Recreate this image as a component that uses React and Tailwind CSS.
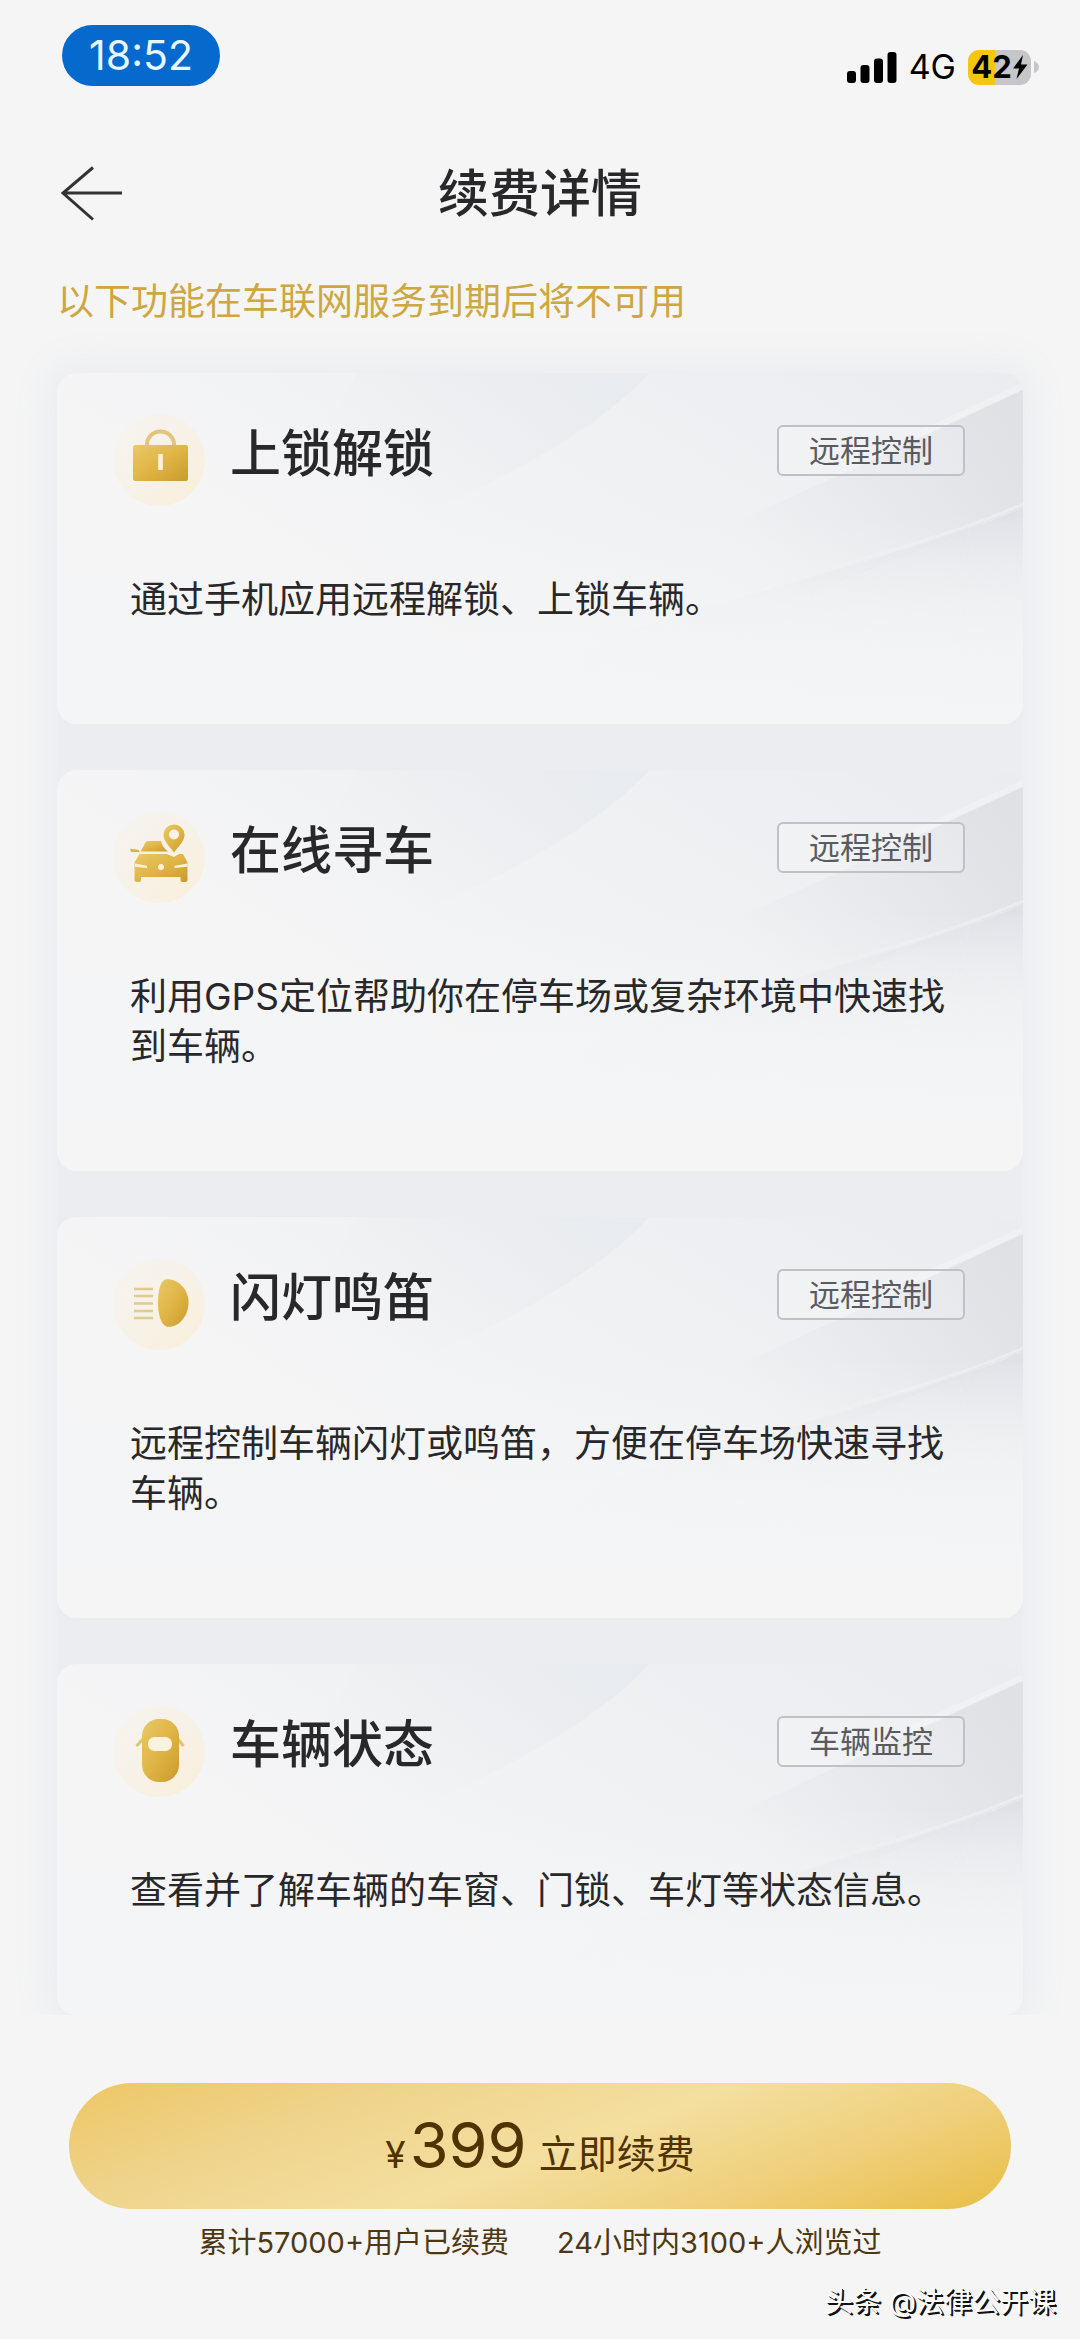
import React from 'react';

const GoldGradient = ({ id }) => (
    <defs>
        <linearGradient id={id} x1="0" y1="0" x2="1" y2="1">
            <stop offset="0" stopColor="#e9c969" />
            <stop offset="0.5" stopColor="#dfb545" />
            <stop offset="1" stopColor="#c99a2c" />
        </linearGradient>
        <linearGradient id={`${id}-halo`} x1="0" y1="0" x2="1" y2="1">
            <stop offset="0" stopColor="#f8f2e6" stopOpacity="0.3" />
            <stop offset="1" stopColor="#f9eed9" />
        </linearGradient>
    </defs>
);

const IconFrame = ({ id, children }) => (
    <svg viewBox="0 0 94 94" className="size-[94px] shrink-0" aria-hidden="true">
        <GoldGradient id={id} />
        <circle cx="47" cy="47" r="46" fill={`url(#${id}-halo)`} />
        {children}
    </svg>
);

const LockIcon = () => (
    <IconFrame id="lock">
        <path d="M35 33v-1.500a13 12.500 0 0 1 27 0v1.500" fill="none" stroke="#e2c47a" strokeWidth="4" />
        <rect x="21" y="32" width="55" height="36" rx="2.500" fill="url(#lock)" />
        <rect x="46.200" y="41" width="4.600" height="16" fill="#fdf3dc" />
    </IconFrame>
);

const FindCarIcon = () => (
    <IconFrame id="find">
        <path
            d="M33 33.500c.6-1.700 1.700-2.500 3.500-2.500h12.500c1 4.500 3.500 8 7 10.500H28.500z"
            fill="url(#find)"
        />
        <path d="M18 38.800l9 1.200.6 2.200-8.600-.4z" fill="#d9ae45" />
        <path
            fillRule="evenodd"
            d="M62 14.500a10.500 10.500 0 0 1 10.500 10.500c0 6-5.500 10.500-10.500 17.500-5-7-10.500-11.500-10.500-17.500A10.500 10.500 0 0 1 62 14.500zm0 5a5 5 0 1 0 0 10 5 5 0 0 0 0-10z"
            fill="url(#find)"
        />
        <path
            d="M27.500 44h27l7.500 3 5-3h4l4.500 8.500V70q0 2-2 2H70q-1.500 0-1.500-2v-3H29v3q0 2-1.500 2h-3q-2 0-2-2V52.500z"
            fill="url(#find)"
        />
        <path d="M23 53.500l12 2.200v2.300l-12-1.200zM75.500 53.500l-13 2.200v2.300l13-1.200z" fill="#fbf0d8" />
        <circle cx="49" cy="57" r="3" fill="#fbf0d8" />
    </IconFrame>
);

const LampIcon = () => (
    <IconFrame id="lamp">
        <path d="M22 32h19M22 39h19M22 46.500h19M22 54h19M22 61h19" stroke="#dfcb8e" strokeWidth="2.600" />
        <path d="M55 22.300C67 22.300 76.500 33 76.500 45.500S68 69.800 56.500 69.800C49.500 69.800 46 58 46 46s2.500-23.700 9-23.700z" fill="url(#lamp)" />
    </IconFrame>
);

const CarStatusIcon = () => (
    <IconFrame id="status">
        <path d="M31 35l-6.500 7M66 35l5.500 7" stroke="#dfc177" strokeWidth="3" />
        <rect x="30" y="15" width="37" height="63" rx="17" fill="url(#status)" />
        <rect x="36" y="33" width="24" height="14" rx="6.500" fill="#fbf3e0" />
    </IconFrame>
);

const features = [
    { title: '上锁解锁', tag: '远程控制', desc: '通过手机应用远程解锁、上锁车辆。', Icon: LockIcon },
    { title: '在线寻车', tag: '远程控制', desc: '利用GPS定位帮助你在停车场或复杂环境中快速找到车辆。', Icon: FindCarIcon },
    { title: '闪灯鸣笛', tag: '远程控制', desc: '远程控制车辆闪灯或鸣笛，方便在停车场快速寻找车辆。', Icon: LampIcon },
    { title: '车辆状态', tag: '车辆监控', desc: '查看并了解车辆的车窗、门锁、车灯等状态信息。', Icon: CarStatusIcon },
];

// Soft folded-paper shading behind the top part of every card
const CardShade = ({ id }) => (
    <svg
        viewBox="0 0 965 351"
        preserveAspectRatio="none"
        className="absolute inset-x-0 top-0 h-[351px] w-full"
        aria-hidden="true"
    >
        <defs>
            <linearGradient id={`${id}-base`} x1="0" y1="0.600" x2="1" y2="0">
                <stop offset="0.200" stopColor="#ebedf0" stopOpacity="0" />
                <stop offset="1" stopColor="#eaecf0" />
            </linearGradient>
            <linearGradient id={`${id}-left`} x1="0" y1="0.500" x2="1" y2="0">
                <stop offset="0.100" stopColor="#e8ebef" stopOpacity="0" />
                <stop offset="1" stopColor="#e8ebef" />
            </linearGradient>
            <linearGradient id={`${id}-fold`} x1="0" y1="0.700" x2="1" y2="0.200">
                <stop offset="0.300" stopColor="#e2e4e8" stopOpacity="0" />
                <stop offset="1" stopColor="#dfe1e5" />
            </linearGradient>
            <linearGradient id={`${id}-low`} x1="0.600" y1="0.100" x2="0.700" y2="0.900">
                <stop offset="0" stopColor="#dfe1e6" />
                <stop offset="1" stopColor="#f0f1f4" stopOpacity="0" />
            </linearGradient>
            <linearGradient id={`${id}-side`} x1="0" y1="0" x2="1" y2="0">
                <stop offset="0.400" stopColor="#fff" stopOpacity="0" />
                <stop offset="0.950" stopColor="#fff" />
            </linearGradient>
            <linearGradient id={`${id}-fade`} x1="0" y1="0" x2="0" y2="1">
                <stop offset="0.400" stopColor="#f4f5f6" stopOpacity="0" />
                <stop offset="1" stopColor="#f4f5f6" />
            </linearGradient>
            <mask id={`${id}-mask`}>
                <rect width="965" height="351" fill={`url(#${id}-side)`} />
            </mask>
        </defs>
        <rect width="965" height="351" fill={`url(#${id}-base)`} />
        <path d="M300 0H592C550 45 480 90 380 135 330 155 280 140 240 110z" fill={`url(#${id}-left)`} />
        <path d="M965 17L860 66 600 185 560 300 965 134z" fill={`url(#${id}-fold)`} />
        <g mask={`url(#${id}-mask)`}>
            <path d="M965 134C900 165 800 190 560 260L480 320H965z" fill={`url(#${id}-low)`} />
            <path d="M965 131C900 160 820 182 700 215" stroke="#eef0f2" strokeWidth="3" strokeOpacity="0.700" fill="none" />
        </g>
        <path d="M965 13L850 66" stroke="#f1f2f4" strokeWidth="6" strokeOpacity="0.700" />
        <rect width="965" height="351" fill={`url(#${id}-fade)`} />
    </svg>
);

const FeatureCard = ({ title, tag, desc, Icon, id }) => (
    <li className="relative overflow-hidden rounded-[20px] bg-[#f5f5f6] pb-[99px] pl-[73px] pr-[58px] pt-10">
        <CardShade id={id} />
        <div className="relative -ml-[18px] flex items-start">
            <Icon />
            <h2 className="ml-6 flex-1 text-[51px] font-medium leading-[82px] text-[#28282a]">{title}</h2>
            <span className="mt-3 rounded-[6px] border-2 border-[#bfc1c6] bg-white/20 px-[30px] text-[31px] leading-[47px] text-[#5a5b5f]">
                {tag}
            </span>
        </div>
        <p className="relative mt-[68px] text-[37px] leading-[50px] text-[#28282a]">{desc}</p>
    </li>
);

const StatusBar = () => (
    <div className="flex items-start justify-between pl-[62px] pr-[41px] pt-[25px]">
        <div className="flex h-[61px] w-[158px] items-center justify-center rounded-full bg-[#0569ce] text-[41px] text-[#e9f7ff]">
            18:52
        </div>
        <div className="mt-6 flex items-center text-black">
            <svg viewBox="0 0 50 32" className="h-8 w-[50px]" aria-hidden="true">
                <rect x="0" y="20" width="9" height="12" rx="3" />
                <rect x="13.500" y="14" width="9" height="18" rx="3" />
                <rect x="27" y="7.500" width="9" height="24.500" rx="3" />
                <rect x="40.500" y="1" width="9" height="31" rx="3" />
            </svg>
            <span className="ml-3 text-[34px] leading-9">4G</span>
            <div className="ml-3 flex h-[35px] w-[63px] items-center justify-center rounded-[11px] bg-[linear-gradient(90deg,#f3c60f_43%,#c6c6c8_43%)] text-[31px] font-bold leading-9">
                42
                <svg viewBox="0 0 16 24" className="h-6 w-4" aria-hidden="true">
                    <path d="M11 0L1 13.500h6L4.500 24 15.500 9.500H9z" />
                </svg>
            </div>
            <svg viewBox="0 0 5 12" className="ml-[3px] h-3 w-[5px]" aria-hidden="true">
                <path d="M0 0Q5 2 5 6T0 12z" fill="#c6c6c8" />
            </svg>
        </div>
    </div>
);

const App = () => {
    return (
        <div className="flex min-h-screen flex-col bg-[#f5f5f5] font-['Inter','Noto_Sans_CJK_SC',sans-serif]">
            <StatusBar />

            <header className="mt-[68px] grid h-20 grid-cols-[1fr_auto_1fr] items-center px-[60px]">
                <button type="button" aria-label="返回" className="justify-self-start">
                    <svg viewBox="0 0 62 56" className="h-14 w-[62px]" fill="none" stroke="#333" strokeWidth="3" aria-hidden="true">
                        <path d="M33 1.500L3 27l30 26.500M3 27h59" />
                    </svg>
                </button>
                <h1 className="text-[51px] font-medium leading-[80px] text-[#28282a]">续费详情</h1>
            </header>

            <main className="flex-1 overflow-hidden px-[57px]">
                <p className="mt-10 text-[37px] leading-[56px] text-[#cda73f]">以下功能在车联网服务到期后将不可用</p>
                <ul className="mt-[43px] flex flex-col gap-[46px] rounded-[20px] bg-[#ebedf1] shadow-[0_0_36px_12px_#ebedf1]">
                    {features.map((item, index) => (
                        <FeatureCard key={item.title} id={`card${index}`} {...item} />
                    ))}
                </ul>
            </main>

            <footer className="flex flex-col pb-[18px] pt-[68px]">
                <button
                    type="button"
                    className="mx-[69px] flex h-[126px] items-baseline justify-center rounded-full bg-[linear-gradient(160deg,#edc765_0%,#efd38a_25%,#f4dfa0_52%,#efd07c_75%,#eac151_95%)] text-[#4f3300]"
                >
                    <span className="text-[37px]">¥</span>
                    <span className="ml-1 text-[63px] leading-[124px]">399</span>
                    <span className="ml-3 text-[39px]">立即续费</span>
                </button>
                <div className="mt-[14px] flex justify-center gap-12 text-[29px] leading-10 text-[#4d3814]">
                    <span>累计57000+用户已续费</span>
                    <span>24小时内3100+人浏览过</span>
                </div>
                <p className="mt-[19px] pr-6 text-right text-[28px] leading-10 text-white [text-shadow:2px_2px_0_#111,1px_1px_0_#111]">
                    头条 @法律公开课
                </p>
            </footer>
        </div>
    );
};

export default App;
